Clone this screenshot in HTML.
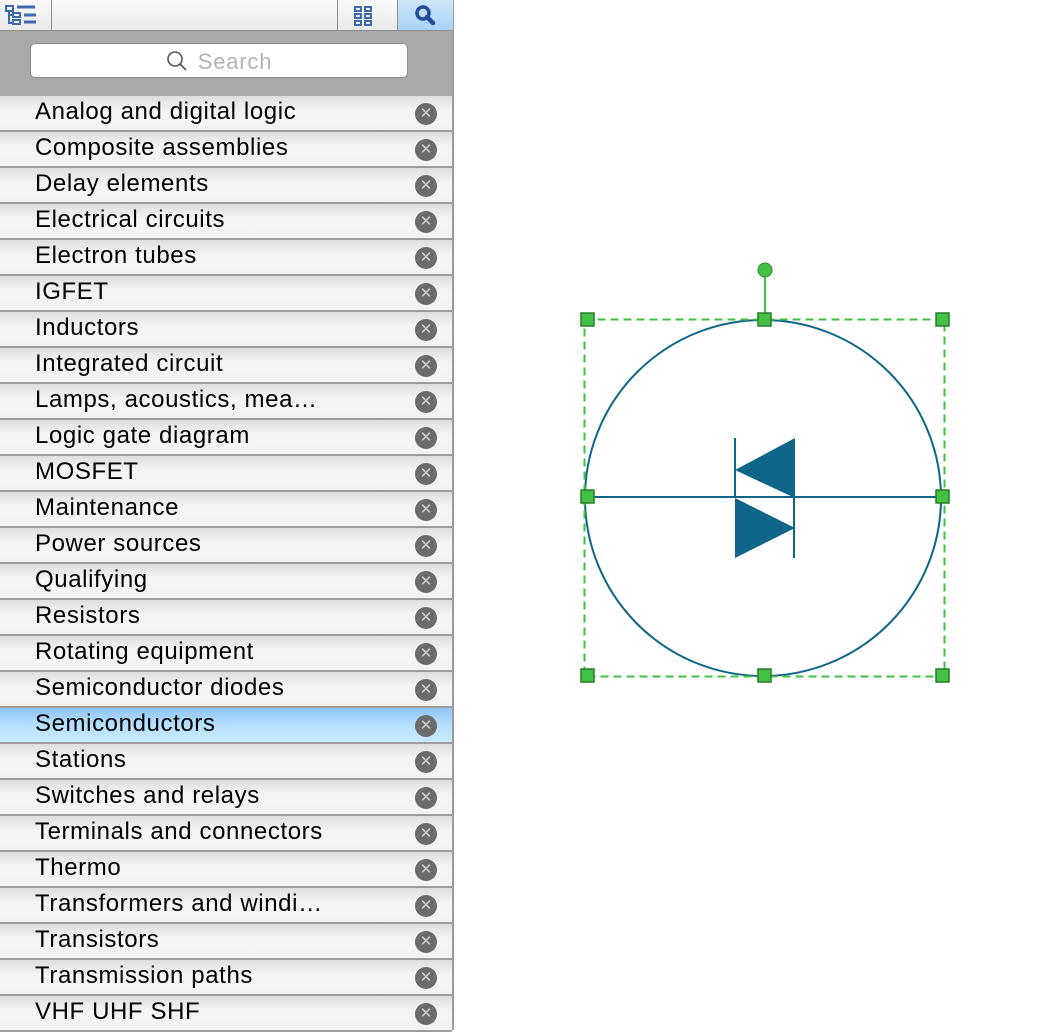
<!DOCTYPE html>
<html><head><style>
body{margin:0;width:1060px;height:1030px;background:#fff;overflow:hidden;font-family:"Liberation Sans",sans-serif;position:relative}
#panel{position:absolute;left:0;top:0;width:452px;height:1030px;border-right:2px solid #9b9b9b;background:#f0f0f0}
#hdr{position:absolute;left:0;top:0;width:452px;height:30px;background:linear-gradient(#fafafa,#e9e9e9);border-bottom:1px solid #8e8e8e}
#sb{position:absolute;left:0;top:31px;width:452px;height:65px;background:#a9a9a9}
#sf{position:absolute;left:30px;top:12px;width:378px;height:35px;background:#fff;border:1px solid #8d8d8d;border-radius:5px;box-sizing:border-box;text-align:center;color:#b3b3b3;font-size:22px;letter-spacing:0.8px;line-height:35px}
.row{position:absolute;left:0;width:452px;height:34px;border-bottom:2px solid #9d9d9d;background:linear-gradient(#dedede,#f5f5f5 45%,#f2f2f2);font-size:24px;letter-spacing:0.6px;line-height:32px;color:#000}
.row span{position:absolute;left:35px;top:0}
.row i{position:absolute;left:415px;top:7px;width:22px;height:22px;border-radius:50%;background:#6b6b6b;color:#cfcfcf;font-style:normal;font-size:15px;letter-spacing:0;line-height:22px;text-align:center}
.sel{background:linear-gradient(#8fc4f5,#b6e0ff 50%,#c7eaff)}
</style></head><body>
<div id="panel">
<div id="hdr">
<svg style="position:absolute;left:4px;top:4px" width="34" height="22"><g fill="none" stroke="#3d6aad" stroke-width="2"><rect x="2" y="2" width="7" height="5"/><rect x="9" y="9" width="7" height="4"/><rect x="9" y="16" width="7" height="4"/><path d="M5 7v12h4M5 11h4"/></g><path d="M13 3h18M20 11h12M20 18h12" stroke="#3d6aad" stroke-width="3"/></svg>
<div style="position:absolute;left:51px;top:0;width:1px;height:30px;background:#8e8e8e"></div>
<div style="position:absolute;left:337px;top:0;width:1px;height:30px;background:#8e8e8e"></div>
<svg style="position:absolute;left:353px;top:5px" width="22" height="22"><g fill="none" stroke="#3d6aad" stroke-width="2"><rect x="2" y="2" width="6" height="4"/><rect x="12" y="2" width="6" height="4"/><rect x="2" y="9" width="6" height="4"/><rect x="12" y="9" width="6" height="4"/><rect x="2" y="16" width="6" height="4"/><rect x="12" y="16" width="6" height="4"/></g></svg>
<div style="position:absolute;left:397px;top:0;width:55px;height:30px;background:linear-gradient(#cfe6fb,#a9d2f5);border-left:1px solid #8e8e8e"></div>
<svg style="position:absolute;left:414px;top:4px" width="24" height="24"><circle cx="9" cy="9" r="6" fill="none" stroke="#1f4f96" stroke-width="3.5"/><path d="M13 13l6 6" stroke="#1f4f96" stroke-width="4.5" stroke-linecap="round"/></svg>
</div>
<div id="sb"><div id="sf"><svg style="vertical-align:-3px;margin-right:10px" width="22" height="22"><circle cx="9" cy="9" r="7" fill="none" stroke="#555" stroke-width="1.6"/><path d="M14 14l6 6" stroke="#555" stroke-width="1.8"/></svg>Search</div></div>
<div class="row" style="top:96px"><span>Analog and digital logic</span><i>✕</i></div>
<div class="row" style="top:132px"><span>Composite assemblies</span><i>✕</i></div>
<div class="row" style="top:168px"><span>Delay elements</span><i>✕</i></div>
<div class="row" style="top:204px"><span>Electrical circuits</span><i>✕</i></div>
<div class="row" style="top:240px"><span>Electron tubes</span><i>✕</i></div>
<div class="row" style="top:276px"><span>IGFET</span><i>✕</i></div>
<div class="row" style="top:312px"><span>Inductors</span><i>✕</i></div>
<div class="row" style="top:348px"><span>Integrated circuit</span><i>✕</i></div>
<div class="row" style="top:384px"><span>Lamps, acoustics, mea…</span><i>✕</i></div>
<div class="row" style="top:420px"><span>Logic gate diagram</span><i>✕</i></div>
<div class="row" style="top:456px"><span>MOSFET</span><i>✕</i></div>
<div class="row" style="top:492px"><span>Maintenance</span><i>✕</i></div>
<div class="row" style="top:528px"><span>Power sources</span><i>✕</i></div>
<div class="row" style="top:564px"><span>Qualifying</span><i>✕</i></div>
<div class="row" style="top:600px"><span>Resistors</span><i>✕</i></div>
<div class="row" style="top:636px"><span>Rotating equipment</span><i>✕</i></div>
<div class="row" style="top:672px"><span>Semiconductor diodes</span><i>✕</i></div>
<div class="row sel" style="top:708px"><span>Semiconductors</span><i>✕</i></div>
<div class="row" style="top:744px"><span>Stations</span><i>✕</i></div>
<div class="row" style="top:780px"><span>Switches and relays</span><i>✕</i></div>
<div class="row" style="top:816px"><span>Terminals and connectors</span><i>✕</i></div>
<div class="row" style="top:852px"><span>Thermo</span><i>✕</i></div>
<div class="row" style="top:888px"><span>Transformers and windi…</span><i>✕</i></div>
<div class="row" style="top:924px"><span>Transistors</span><i>✕</i></div>
<div class="row" style="top:960px"><span>Transmission paths</span><i>✕</i></div>
<div class="row" style="top:996px"><span>VHF UHF SHF</span><i>✕</i></div>
</div>
<svg style="position:absolute;left:0;top:0" width="1060" height="1030">
<circle cx="763" cy="498" r="178" fill="none" stroke="#0e6589" stroke-width="2"/>
<path d="M588 497H943M735 438V498M794 498V558" stroke="#0e6589" stroke-width="2"/>
<path d="M795 438V498L735 470Z M735 498V558L795 528Z" fill="#0e6589"/>
<rect x="584.5" y="319.5" width="360" height="357" fill="none" stroke="#3fc23f" stroke-width="2" stroke-dasharray="8,5"/>
<path d="M765 276V320" stroke="#3fc23f" stroke-width="2"/>
<circle cx="765" cy="270" r="7" fill="#42c142" stroke="#2b8a2b"/>
<g fill="#42c142" stroke="#2a7a2a" stroke-width="1.5">
<rect x="581" y="313" width="13" height="13"/><rect x="758" y="313" width="13" height="13"/><rect x="936" y="313" width="13" height="13"/>
<rect x="581" y="490" width="13" height="13"/><rect x="936" y="490" width="13" height="13"/>
<rect x="581" y="669" width="13" height="13"/><rect x="758" y="669" width="13" height="13"/><rect x="936" y="669" width="13" height="13"/>
</g>
</svg>
</body></html>
